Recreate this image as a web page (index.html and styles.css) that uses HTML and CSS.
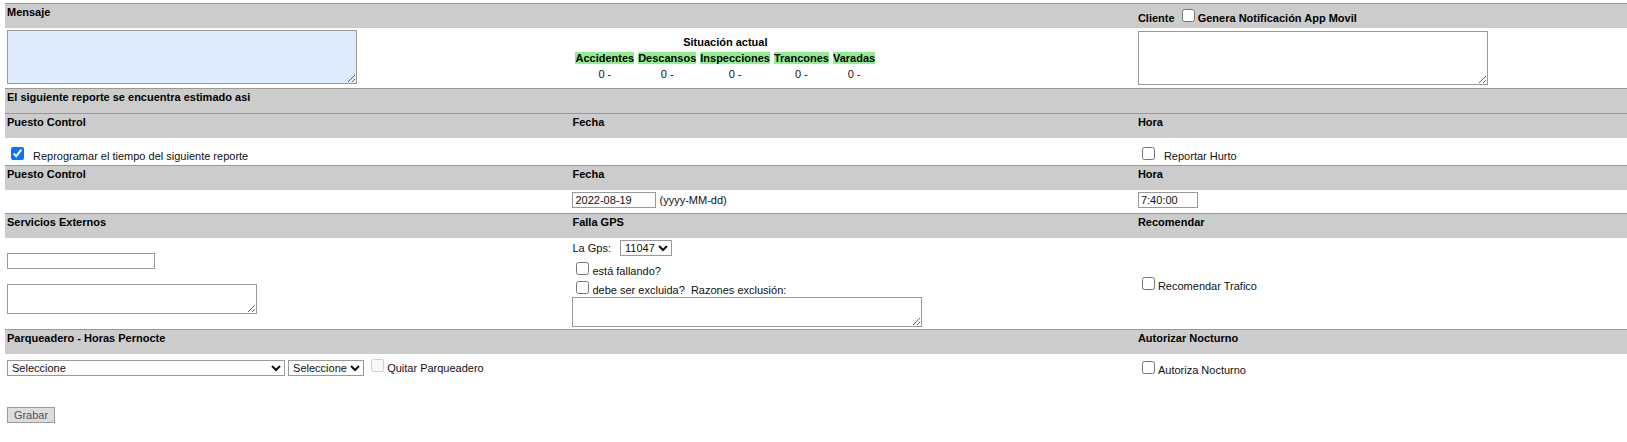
FILE: index.html
```html
<!DOCTYPE html>
<html lang="es">
<head>
<meta charset="utf-8">
<title>Reporte de seguimiento</title>
<link rel="stylesheet" href="styles.css">
</head>
<body>
<form class="report">
  <div class="row head">
    <div class="cell"><label for="mensaje">Mensaje</label></div>
    <div class="cell"></div>
    <div class="cell"><label for="cliente">Cliente</label> <input type="checkbox" id="notifica"><label for="notifica">Genera Notificación App Movil</label></div>
  </div>
  <div class="row">
    <div class="cell"><textarea class="box box-large box-required" id="mensaje"></textarea></div>
    <div class="cell middle">
      <table class="status">
        <thead>
          <tr><th colspan="5">Situación actual</th></tr>
          <tr><th><span class="tag">Accidentes</span></th><th><span class="tag">Descansos</span></th><th><span class="tag">Inspecciones</span></th><th><span class="tag">Trancones</span></th><th><span class="tag">Varadas</span></th></tr>
        </thead>
        <tbody>
          <tr><td>0 -</td><td>0 -</td><td>0 -</td><td>0 -</td><td>0 -</td></tr>
        </tbody>
      </table>
    </div>
    <div class="cell spacious"><textarea class="box box-large" id="cliente"></textarea></div>
  </div>

  <div class="row head">
    <div class="cell">El siguiente reporte se encuentra estimado asi</div>
  </div>
  <div class="row head">
    <div class="cell">Puesto Control</div>
    <div class="cell">Fecha</div>
    <div class="cell">Hora</div>
  </div>
  <div class="row options">
    <div class="cell"><input type="checkbox" id="reprogramar" checked><label class="apart" for="reprogramar">Reprogramar el tiempo del siguiente reporte</label></div>
    <div class="cell"></div>
    <div class="cell"><input type="checkbox" id="hurto"><label class="apart" for="hurto">Reportar Hurto</label></div>
  </div>

  <div class="row head">
    <div class="cell">Puesto Control</div>
    <div class="cell"><label for="fecha">Fecha</label></div>
    <div class="cell"><label for="hora">Hora</label></div>
  </div>
  <div class="row dates">
    <div class="cell"></div>
    <div class="cell"><input class="field date" type="text" id="fecha" value="2022-08-19"> (yyyy-MM-dd)</div>
    <div class="cell"><input class="field time" type="text" id="hora" value="7:40:00"></div>
  </div>

  <div class="row head">
    <div class="cell"><label for="servicios">Servicios Externos</label></div>
    <div class="cell">Falla GPS</div>
    <div class="cell">Recomendar</div>
  </div>
  <div class="row">
    <div class="cell middle services">
      <input class="field service" type="text" id="servicios">
      <textarea class="box box-small" aria-label="Detalle de servicios externos"></textarea>
    </div>
    <div class="cell">
      <div class="gps"><label for="gps">La Gps:</label><select class="field device" id="gps"><option>11047</option></select></div>
      <div><input type="checkbox" id="fallando"><label for="fallando">está fallando?</label></div>
      <div><input type="checkbox" id="excluida"><label for="excluida">debe ser excluida?</label>&nbsp; <label for="razones">Razones exclusión:</label></div>
      <textarea class="box box-wide" id="razones"></textarea>
    </div>
    <div class="cell middle"><div><input type="checkbox" id="trafico"><label for="trafico">Recomendar Trafico</label></div></div>
  </div>

  <div class="row head">
    <div class="cell">Parqueadero - Horas Pernocte</div>
    <div class="cell"></div>
    <div class="cell">Autorizar Nocturno</div>
  </div>
  <div class="row parking">
    <div class="cell"><select class="field lot" aria-label="Parqueadero"><option>Seleccione</option></select> <select class="field hours" aria-label="Horas Pernocte"><option>Seleccione</option></select> <input type="checkbox" id="quitar" disabled><label for="quitar">Quitar Parqueadero</label></div>
    <div class="cell"></div>
    <div class="cell middle"><div><input type="checkbox" id="nocturno"><label for="nocturno">Autoriza Nocturno</label></div></div>
  </div>

  <div class="actions"><button class="save" type="button">Grabar</button></div>
</form>
</body>
</html>
```

FILE: styles.css
```css
* {
  box-sizing: border-box;
}

body {
  margin: 0;
  background: #fff;
  color: #111;
  font: 11px/12px "Liberation Sans", Arial, sans-serif;
}

.report {
  padding: 3px 0 0 5px;
}

.row {
  display: grid;
  grid-template-columns: 38fr 38fr 33fr;
}

.cell {
  padding: 2px;
  white-space: nowrap;
}

.head {
  min-height: 25px;
  border-top: 1px solid #999;
  background: #ccc;
  color: #000;
  font-weight: bold;
}

.head .cell {
  padding-bottom: 0;
}

.middle {
  display: flex;
  align-items: center;
}

input[type="checkbox"] {
  width: 13px;
  height: 13px;
  margin: 3px 3px 3px 4px;
}

.apart {
  margin-left: 6px;
}

.box,
.field {
  border: 1px solid #999;
  border-radius: 0;
  background: #fff;
  color: #111;
  font: inherit;
}

.box {
  display: block;
  max-width: 100%;
  margin: 0;
  padding: 2px;
}

.box-large {
  width: 350px;
  height: 54px;
}

.box-required {
  background: #dfebfd;
}

.box-small {
  width: 250px;
  height: 30px;
}

.box-wide {
  width: 350px;
  height: 30px;
}

.spacious {
  padding: 3px 2px;
}

.status {
  border-spacing: 2px;
  text-align: center;
}

.status th,
.status td {
  padding: 1px;
}

.status th {
  color: #000;
}

.tag {
  background: #90ee90;
}

.options .cell {
  padding-top: 6px;
}

.field {
  height: 16px;
  margin: 0;
  padding: 1px 2px;
}

select.field {
  padding: 0;
}

.dates {
  min-height: 23px;
}

.date {
  width: 84px;
}

.time {
  width: 60px;
}

.services {
  flex-direction: column;
  align-items: flex-start;
  justify-content: center;
  gap: 15px;
}

.service {
  width: 148px;
}

.gps {
  display: flex;
  align-items: center;
  gap: 9px;
  padding-bottom: 3px;
}

.device {
  width: 52px;
}

.parking {
  min-height: 27px;
}

.lot {
  width: 278px;
}

.hours {
  width: 76px;
}

.actions {
  padding: 26px 2px 16px;
}

.save {
  display: block;
  width: 48px;
  height: 16px;
  padding: 0;
  border: 1px solid #999;
  background: #ddd;
  color: #555;
  font: inherit;
}
```
